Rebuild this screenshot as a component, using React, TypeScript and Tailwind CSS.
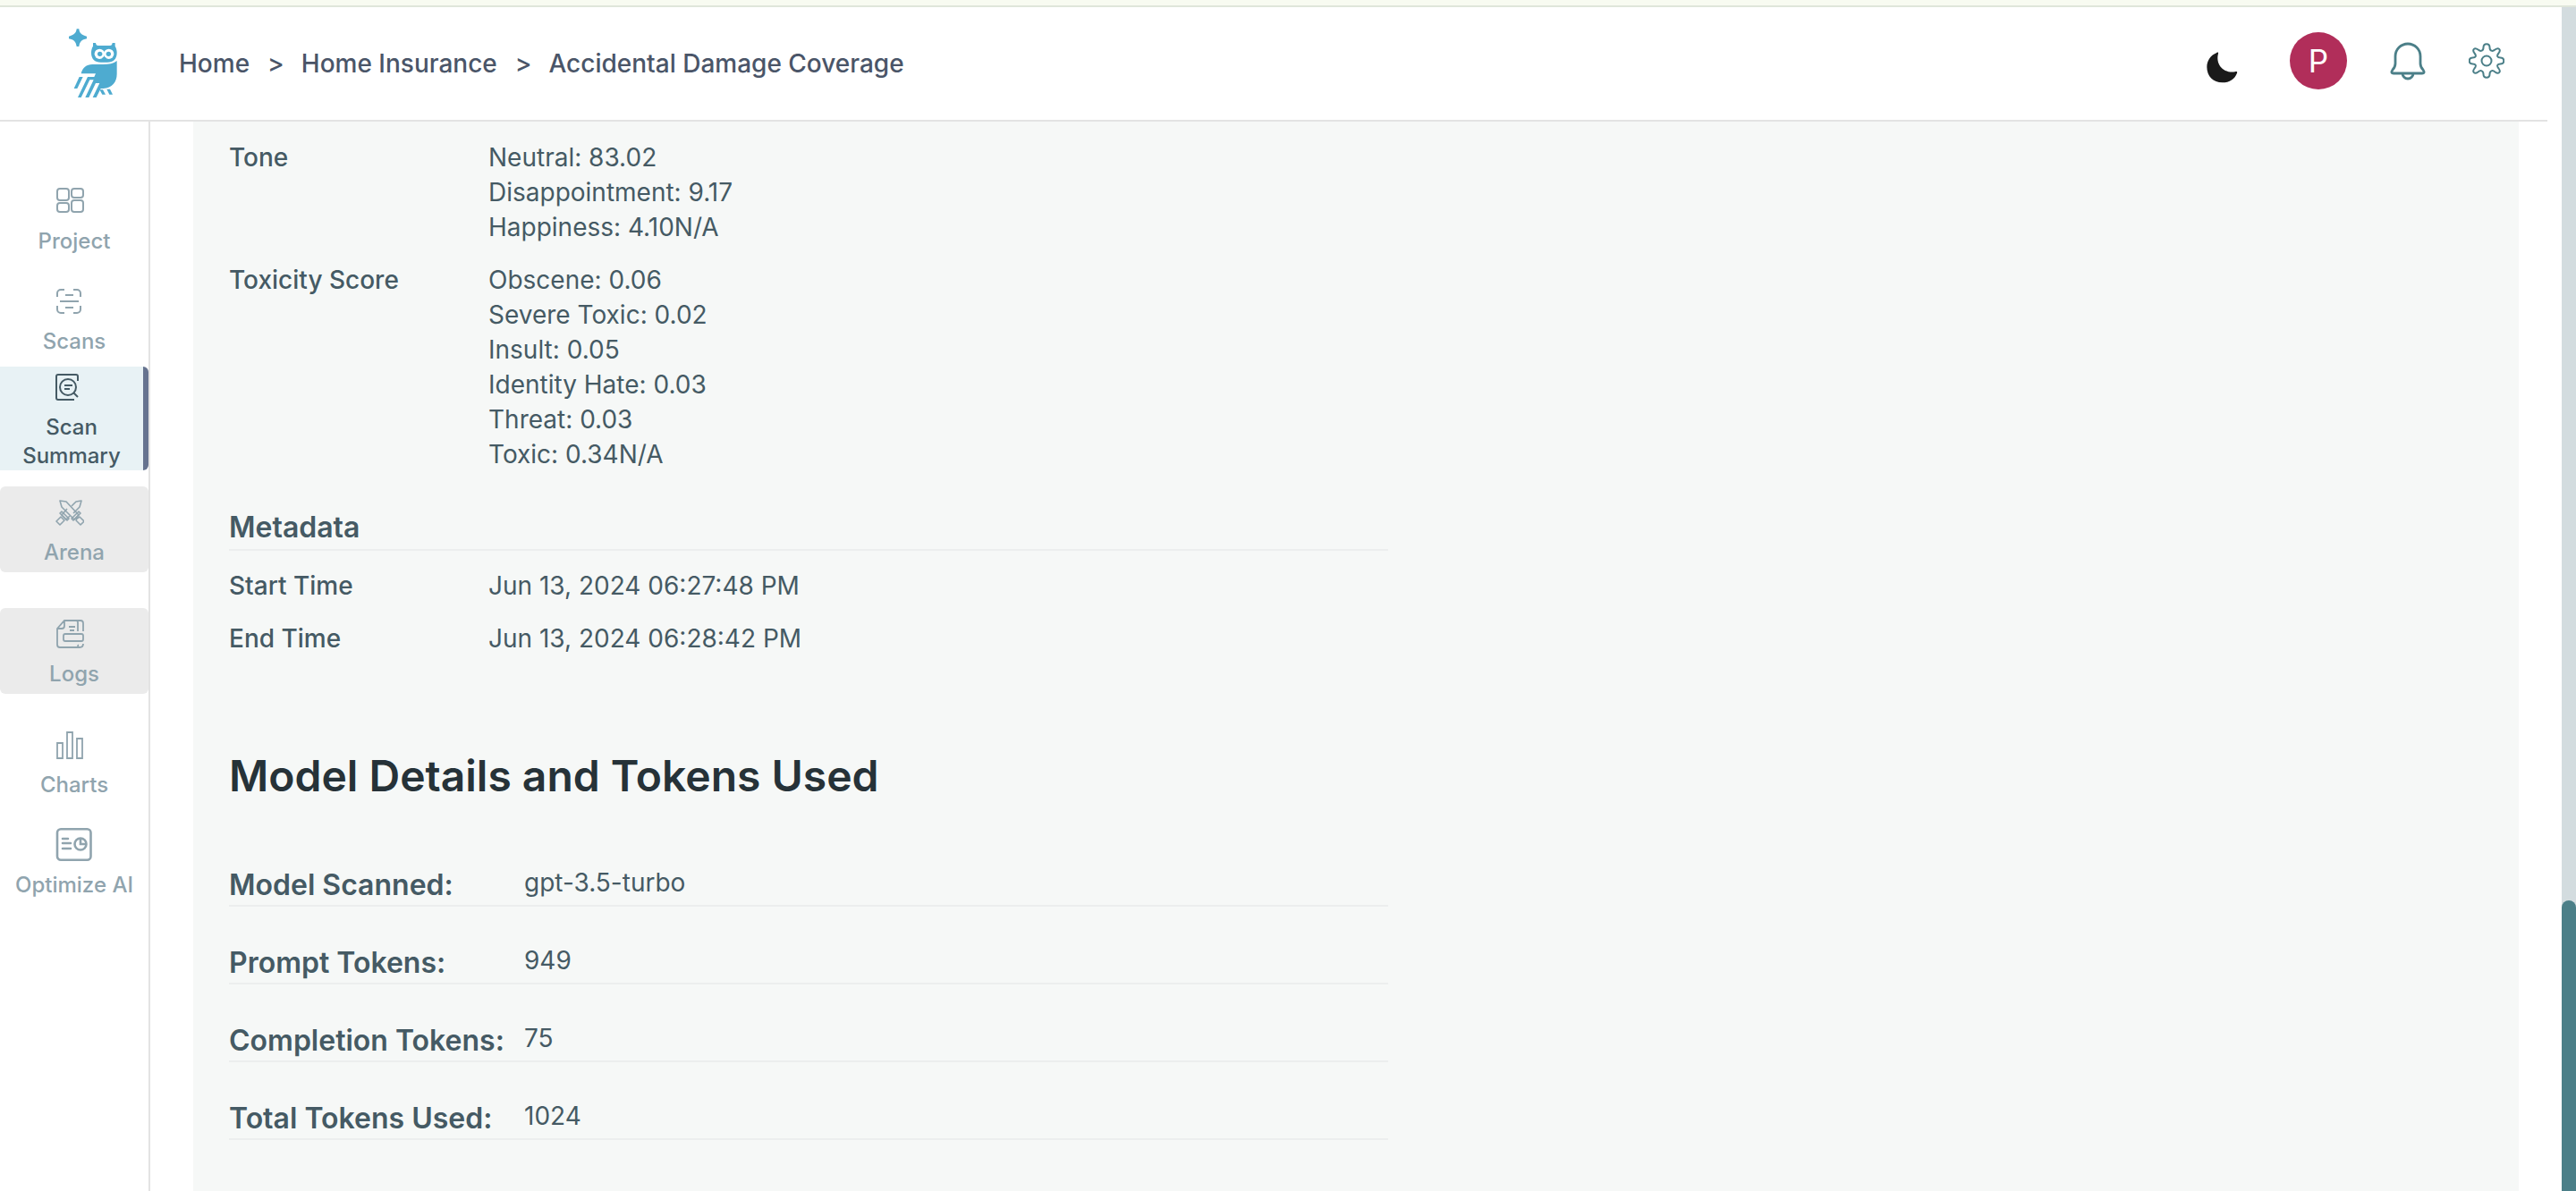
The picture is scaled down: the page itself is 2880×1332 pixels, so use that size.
import React from 'react';

type IconProps = { className?: string };

interface NavItem {
  label: string;
  icon: React.FC<IconProps>;
  state?: 'active' | 'disabled';
  className?: string;
}

const OwlLogo: React.FC<IconProps> = ({ className }) => (
  <svg viewBox="231 96 162 234" className={className} fill="#4eabd0" aria-hidden="true">
    <path d="M257 97h8c1 13 8 21 26 25v8c-17 3-24 11-26 26h-8c-2-15-9-23-26-26v-8c17-4 25-12 26-25z" />
    <path d="M312 144h9c1 6 3 9 8 9h40c5 0 7-3 8-9h9v11c4 6 6 14 6 22 0 21-12 32-32 32h-22c-20 0-32-11-32-32 0-8 2-16 6-22z" />
    <g fill="#fff">
      <circle cx="334" cy="181" r="17" />
      <circle cx="365" cy="181" r="17" />
    </g>
    <circle cx="335" cy="181" r="8" />
    <circle cx="364" cy="181" r="8" />
    <path d="M343 192h13l-6 11z" />
    <path d="M392 204v44c0 28-16 46-46 49h-8l-15 30h-12l23-48h-13l-23 48h-12l28-59h-13l-29 59h-11l33-69h22l5-11h-49c4-19 18-31 38-31h35c20 0 36-3 47-12z" />
    <path d="M266 258h12l-19 39h-11z" />
    <path d="M334 301h11l9 16h-11zM358 299h11l9 18h-11z" />
  </svg>
);

const ProjectIcon: React.FC<IconProps> = ({ className }) => (
  <svg viewBox="0 0 32 32" className={className} fill="none" stroke="currentColor" strokeWidth="2" aria-hidden="true">
    <rect x="2" y="2" width="13" height="13" rx="3" />
    <rect x="18" y="2" width="13" height="10" rx="3" />
    <rect x="2" y="18" width="13" height="10" rx="3" />
    <rect x="18" y="15" width="13" height="13" rx="3" />
  </svg>
);

const ScansIcon: React.FC<IconProps> = ({ className }) => (
  <svg viewBox="0 0 32 32" className={className} fill="none" stroke="currentColor" strokeWidth="2" aria-hidden="true">
    <path d="M2 11V7a4 4 0 0 1 4-4h4M20 3h4a4 4 0 0 1 4 4v4M28 21v4a4 4 0 0 1-4 4h-4M10 29H6a4 4 0 0 1-4-4v-4M5 16h21M11 9h9M11 23h9" />
  </svg>
);

const ScanSummaryIcon: React.FC<IconProps> = ({ className }) => (
  <svg viewBox="0 0 32 32" className={className} fill="none" stroke="currentColor" strokeWidth="2" aria-hidden="true">
    <path d="M20 30H2a2 2 0 0 1-2-2V4a2 2 0 0 1 2-2h20a2 2 0 0 1 2 2v5" transform="translate(1)" />
    <circle cx="14" cy="16" r="9" />
    <path d="m20 22 5 5M10 14h9M10 18h6" />
  </svg>
);

const ArenaIcon: React.FC<IconProps> = ({ className }) => (
  <svg viewBox="0 0 32 32" className={className} fill="none" stroke="currentColor" strokeWidth="1.6" strokeLinejoin="round" aria-hidden="true">
    <path d="m5 3 7 1 14 15-5 5L7 10z" />
    <path d="M18 9l5-5 6-1-2 7-7 7M13 12l-6 7 5 5 4-4" />
    <path d="m18 23 8-8 2 2-8 8zM24 23l3-2 5 5-4 4-5-5zM15 23l-8-8-2 2 8 8zM9 24l-3-3-5 5 4 4 5-5z" />
  </svg>
);

const LogsIcon: React.FC<IconProps> = ({ className }) => (
  <svg viewBox="0 0 32 32" className={className} fill="none" stroke="currentColor" strokeWidth="1.8" aria-hidden="true">
    <path d="M25 13V3a2 2 0 0 0-2-2H10L2 10v18a3 3 0 0 0 3 3h18a2 2 0 0 0 2-3M2 10h5a3 3 0 0 0 3-3V1M23 1h5a3 3 0 0 1 3 3v9M31 27c0 3-1 4-4 4h-5" />
    <rect x="9" y="16" width="22" height="8" rx="2" />
    <path d="M15 8h7M16 12h5" />
  </svg>
);

const ChartsIcon: React.FC<IconProps> = ({ className }) => (
  <svg viewBox="0 0 32 32" className={className} fill="none" stroke="currentColor" strokeWidth="1.8" aria-hidden="true">
    <path d="M2 14h6v17H2zM13 2h6v29h-6zM24 9h6v22h-6z" />
  </svg>
);

const OptimizeIcon: React.FC<IconProps> = ({ className }) => (
  <svg viewBox="0 0 41 38" className={className} fill="none" stroke="currentColor" strokeWidth="2.6" aria-hidden="true">
    <rect x="2" y="1.3" width="37.5" height="34.5" rx="4" />
    <path d="M8 12h6M8 17h9M8 23h9" strokeLinecap="round" />
    <circle cx="28" cy="18" r="6.5" />
    <path d="M28 11v7h7" />
  </svg>
);

const MoonIcon: React.FC<IconProps> = ({ className }) => (
  <svg viewBox="202 173 105 105" className={className} fill="#1a1a1a" aria-hidden="true">
    <path d="M236 176c4-3 6-1 5 3-10 36 18 67 56 61 6-2 9 0 7 4-7 20-25 32-49 32-31 0-52-22-52-52 0-22 13-40 33-48z" />
  </svg>
);

const BellIcon: React.FC<IconProps> = ({ className }) => (
  <svg viewBox="0 0 40 44" className={className} fill="none" stroke="currentColor" strokeWidth="2.8" strokeLinejoin="round" aria-hidden="true">
    <path d="M6 17a14 14 0 0 1 28 0v8c0 3 1 5 3 7 2 3 1 4-1 4H4c-2 0-3-1-1-4 2-2 3-4 3-7z" />
    <path d="M14 36a6 6 0 0 0 12 0" />
  </svg>
);

const GearIcon: React.FC<IconProps> = ({ className }) => (
  <svg viewBox="0 0 40 40" className={className} fill="none" stroke="currentColor" strokeWidth="2" strokeLinejoin="round" aria-hidden="true">
    <path d="M16.5 5c0-5 7-5 7 0 0 4 3 5 6 2.500 4-3 7 0 4 4-2.500 3-1.500 5 2 5 5 0 5 7 0 7-3.500 0-4.500 2-2 5 3 4 0 7-4 4-3-2.500-6-1.500-6 2.500 0 5-7 5-7 0 0-4-3-5-6-2.500-4 3-7 0-4-4 2.500-3 1.500-5-2-5-5 0-5-7 0-7 3.500 0 4.500-2 2-5-3-4 0-7 4-4 3 2.500 6 1.500 6-2.500z" />
    <circle cx="20" cy="20" r="5.5" />
  </svg>
);

const breadcrumbs = ['Home', 'Home Insurance', 'Accidental Damage Coverage'];

const navItems: NavItem[] = [
  { label: 'Project', icon: ProjectIcon },
  { label: 'Scans', icon: ScansIcon },
  { label: 'Scan Summary', icon: ScanSummaryIcon, state: 'active' },
  { label: 'Arena', icon: ArenaIcon, state: 'disabled', className: 'mt-[18px] mb-10' },
  { label: 'Logs', icon: LogsIcon, state: 'disabled', className: 'mb-[18px]' },
  { label: 'Charts', icon: ChartsIcon },
  { label: 'Optimize AI', icon: OptimizeIcon },
];

const scores = [
  { label: 'Tone', values: ['Neutral: 83.02', 'Disappointment: 9.17', 'Happiness: 4.10N/A'] },
  {
    label: 'Toxicity Score',
    values: ['Obscene: 0.06', 'Severe Toxic: 0.02', 'Insult: 0.05', 'Identity Hate: 0.03', 'Threat: 0.03', 'Toxic: 0.34N/A'],
  },
];

const metadata = [
  { label: 'Start Time', values: ['Jun 13, 2024 06:27:48 PM'] },
  { label: 'End Time', values: ['Jun 13, 2024 06:28:42 PM'] },
];

const tokenDetails = [
  { label: 'Model Scanned:', value: 'gpt-3.5-turbo' },
  { label: 'Prompt Tokens:', value: '949' },
  { label: 'Completion Tokens:', value: '75' },
  { label: 'Total Tokens Used:', value: '1024' },
];

const itemStyles = {
  default: 'h-28 pt-[19px] text-[#90a4ae]',
  active: 'h-[116px] pt-[3px] text-[#455a64] bg-[#e8f2f5] border-r-[6px] border-[#66738f] rounded-r-md',
  disabled: 'h-24 pt-[9px] text-[#90a4ae] bg-[#ebebeb] rounded-md',
};

const Header: React.FC = () => (
  <header className="flex items-center h-32 mr-4 pl-[77px] pr-[48px] border-b-2 border-[#e3e3e3]">
    <a href="#home" aria-label="Dashboard" className="mr-[69px]">
      <OwlLogo className="w-[54px] h-[78px]" />
    </a>
    <nav aria-label="Breadcrumb" className="flex-1">
      <ol className="flex items-center text-[28px] leading-10 font-medium text-[#4a5568]">
        {breadcrumbs.map((crumb, i) => (
          <li key={crumb} className="flex">
            {i > 0 && <span className="ml-5 mr-[19px]">&gt;</span>}
            <a href="#crumb">{crumb}</a>
          </li>
        ))}
      </ol>
    </nav>
    <div className="flex items-center pb-[6px] text-[#4b7f88]">
      <button aria-label="Toggle theme" className="mt-[14px] mr-[58px]"><MoonIcon className="w-[35px] h-[35px]" /></button>
      <button aria-label="Profile" className="w-16 h-16 mr-12 rounded-full bg-[#b12e5a] text-white text-[35px] leading-none">P</button>
      <button aria-label="Notifications" className="mr-12"><BellIcon className="w-10 h-11" /></button>
      <button aria-label="Settings"><GearIcon className="w-10 h-10" /></button>
    </div>
  </header>
);

const Sidebar: React.FC = () => (
  <nav aria-label="Main" className="w-[168px] shrink-0 pt-[50px] border-r-2 border-[#e3e3e3]">
    {navItems.map(({ label, icon: Icon, state = 'default', className = '' }) => (
      <button
        key={label}
        disabled={state === 'disabled'}
        className={`w-full flex flex-col items-center text-[24px] leading-8 font-medium ${itemStyles[state]} ${className}`}
      >
        <span className="h-10 mb-[9px] ml-[62px] self-start flex items-center">
          <Icon className={label === 'Optimize AI' ? 'w-[41px] h-[38px]' : 'w-8 h-8'} />
        </span>
        <span className={state === 'active' ? 'w-32' : 'whitespace-nowrap'}>{label}</span>
      </button>
    ))}
  </nav>
);

const DetailRow: React.FC<{ label: string; values: string[] }> = ({ label, values }) => (
  <div className="flex mb-5 text-[28px] leading-[39px]">
    <dt className="w-[290px] shrink-0 font-medium">{label}</dt>
    <dd>
      {values.map((value) => (
        <p key={value}>{value}</p>
      ))}
    </dd>
  </div>
);

const App: React.FC = () => {
  return (
    <div className="flex flex-col h-screen overflow-hidden bg-white font-['Inter',sans-serif]">
      <div className="h-2 shrink-0 bg-[#f8fbf1] border-b-2 border-[#dfe6da]" />
      <div className="flex flex-1 min-h-0">
        <div className="flex flex-col flex-1 min-w-0">
          <Header />
          <div className="flex flex-1 min-h-0">
            <Sidebar />
            <main className="flex-1 mx-12 px-10 pt-[21px] bg-[#f6f8f7] text-[#455a64]">
              <dl>
                {scores.map((row) => <DetailRow key={row.label} {...row} />)}
              </dl>
              <section className="max-w-[1296px] mt-[38px]">
                <h2 className="mb-5 text-[32px] leading-[48px] font-semibold border-b-2 border-[#eceeee]">Metadata</h2>
                <dl>
                  {metadata.map((row) => <DetailRow key={row.label} {...row} />)}
                </dl>
              </section>
              <h1 className="mt-[104px] text-[48px] leading-[60px] font-semibold text-[#263238]">Model Details and Tokens Used</h1>
              <dl className="max-w-[1296px] mt-[29px]">
                {tokenDetails.map(({ label, value }) => (
                  <div key={label} className="flex items-end h-[87px] pb-[2px] border-b-2 border-[#eceeee]">
                    <dt className="w-[330px] shrink-0 text-[32px] leading-10 font-semibold">{label}</dt>
                    <dd className="pb-[3px] text-[28px] leading-10">{value}</dd>
                  </div>
                ))}
              </dl>
            </main>
          </div>
        </div>
        <div className="w-4 shrink-0 flex flex-col justify-end bg-[#d3dcdf]">
          <div className="h-[325px] rounded-t-full bg-[#4b7f88]" />
        </div>
      </div>
    </div>
  );
};

export default App;
